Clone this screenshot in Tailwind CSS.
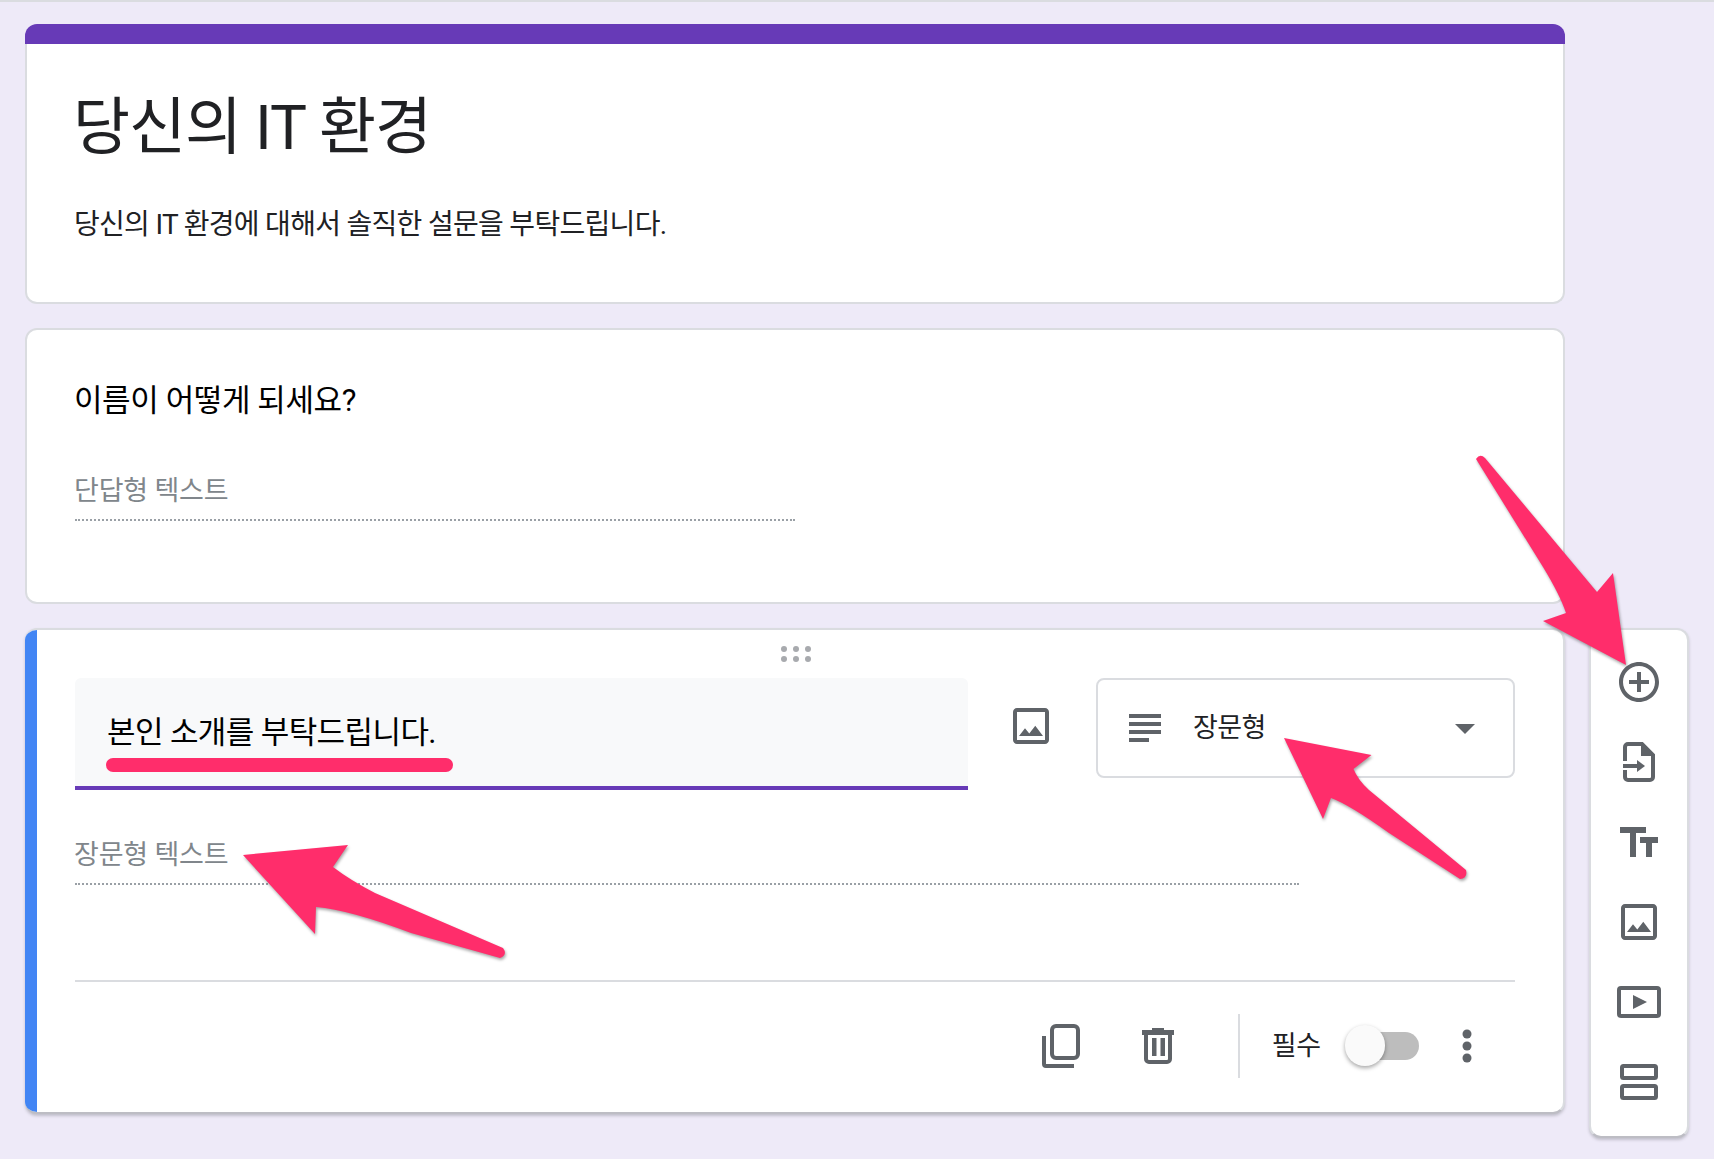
<!DOCTYPE html>
<html lang="ko">
<head>
<meta charset="utf-8">
<script src="https://cdn.jsdelivr.net/npm/@tailwindcss/browser@4"></script>
</head>
<body class="relative h-[1159px] w-[1714px] overflow-hidden border-t-2 border-[#dadce0] bg-[#eeeaf8] font-['Roboto','Noto_Sans_CJK_KR',sans-serif] text-[#202124]">
<main class="flex items-start pl-[25px] pt-[22px]">
  <div class="flex w-[1540px] flex-col">
    <section class="h-[280px]">
      <div class="h-5 rounded-t-xl bg-[#673ab7]"></div>
      <div class="h-[260px] rounded-b-xl border-x-2 border-b-2 border-[#dadce0] bg-white pl-[47px]">
        <h1 class="-ml-[1px] pt-[48px] text-[62px] leading-[72px] tracking-[-1.1px]">당신의 IT 환경</h1>
        <p class="mt-[43px] text-[28px] leading-[36px] tracking-[-0.7px]">당신의 IT 환경에 대해서 솔직한 설문을 부탁드립니다.</p>
      </div>
    </section>

    <section class="mt-[24px] h-[276px] rounded-xl border-2 border-[#dadce0] bg-white pl-[47px]">
      <h2 class="pt-[51px] text-[31px] leading-[40px] tracking-[-0.4px] text-black">이름이 어떻게 되세요?</h2>
      <p class="mt-[52px] text-[27px] leading-[36px] tracking-[-0.2px] text-[#80868b]">단답형 텍스트</p>
      <div class="ml-[1px] mt-[10px] w-[720px] border-b-2 border-dotted border-[#9aa0a6]"></div>
    </section>

    <section class="relative mt-[24px] h-[486px] overflow-hidden rounded-xl border-y-2 border-r-2 border-[#dadce0] border-b-[#bdbdc4] bg-white pl-[50px] pr-[50px] shadow-[0_2px_3px_rgba(60,64,67,.25)]">
      <div class="absolute inset-y-0 left-0 w-3 bg-[#4285f4]"></div>
      <div class="flex justify-center pl-[4px] pt-[16px]">
        <svg class="h-[16px] w-[32px]" viewBox="0 0 32 16" fill="#a8aaae"><circle cx="4" cy="3" r="3"/><circle cx="16" cy="3" r="3"/><circle cx="28" cy="3" r="3"/><circle cx="4" cy="13" r="3"/><circle cx="16" cy="13" r="3"/><circle cx="28" cy="13" r="3"/></svg>
      </div>
      <div class="mt-[16px] flex items-start">
        <div class="relative h-[112px] w-[893px] shrink-0 rounded-t-md border-b-4 border-[#673ab7] bg-[#f8f9fa] pl-[32px] pt-[35px] text-[31px] leading-[40px] tracking-[-0.6px] text-black">
          본인 소개를 부탁드립니다.
          <div class="absolute left-[31px] top-[80px] h-[14px] w-[347px] rounded-full bg-[#ff2d6b]"></div>
        </div>
        <svg class="ml-[39px] mt-[24px] h-[48px] w-[48px] shrink-0" viewBox="0 0 24 24" fill="#5f6368"><path d="M19 5v14H5V5h14m0-2H5c-1.100 0-2 .900-2 2v14c0 1.100.900 2 2 2h14c1.100 0 2-.900 2-2V5c0-1.100-.900-2-2-2zm-4.860 8.860l-3 3.870L9 13.140 6 17h12l-3.860-5.140z"/></svg>
        <div class="ml-[41px] flex h-[100px] w-[419px] shrink-0 items-center rounded-lg border-2 border-[#dadce0] pl-[31px] pr-[38px]">
          <svg class="h-[28px] w-[32px]" viewBox="0 0 32 28" fill="#5f6368"><rect width="32" height="4"/><rect y="8" width="32" height="4"/><rect y="16" width="32" height="4"/><rect y="24" width="20" height="4"/></svg>
          <span class="ml-[32px] text-[27px] leading-[36px] tracking-[-0.6px] text-[#202124]">장문형</span>
          <svg class="ml-auto mt-[2px] h-[10px] w-[20px]" viewBox="0 0 20 10" fill="#5f6368"><path d="M0 0h20L10 10z"/></svg>
        </div>
      </div>
      <p class="-ml-[1px] mt-[47px] text-[27px] leading-[36px] tracking-[-0.2px] text-[#80868b]">장문형 텍스트</p>
      <div class="mt-[10px] w-[1224px] border-b-2 border-dotted border-[#9aa0a6]"></div>
      <div class="mt-[95px] w-[1440px] border-b-2 border-[#dadce0]"></div>
      <div class="mt-[32px] flex h-[64px] w-[1440px] items-center pr-[43px]">
        <svg class="ml-auto h-[44px] w-[38px] shrink-0" viewBox="0 0 38 44" fill="none" stroke="#5f6368" stroke-width="4"><path d="M2 12v28a2 2 0 0 0 2 2h28"/><rect x="10" y="2" width="26" height="32" rx="4"/></svg>
        <svg class="ml-[62px] h-[36px] w-[32px] shrink-0" viewBox="0 0 32 36" fill="#5f6368"><rect y="2" width="32" height="5"/><rect x="10" width="12" height="4"/><path d="M4 6v25a3 3 0 0 0 3 3h18a3 3 0 0 0 3-3V6" fill="none" stroke="#5f6368" stroke-width="4"/><rect x="10" y="10" width="4.500" height="18"/><rect x="18.500" y="10" width="4.500" height="18"/></svg>
        <div class="ml-[64px] h-[64px] w-[2px] shrink-0 bg-[#dadce0]"></div>
        <span class="ml-[32px] text-[27px] leading-[36px] tracking-[-0.2px] text-[#202124]">필수</span>
        <div class="relative ml-[24px] h-[42px] w-[74px] shrink-0">
          <div class="absolute right-0 top-[7px] h-[28px] w-[60px] rounded-full bg-[#bdbdbd]"></div>
          <div class="absolute left-0 top-0 h-[41px] w-[40px] rounded-full bg-[#fafafa] shadow-[0_2px_4px_rgba(0,0,0,.35)]"></div>
        </div>
        <svg class="ml-[43px] h-[34px] w-[10px] shrink-0" viewBox="0 0 10 34" fill="#5f6368"><circle cx="5" cy="5" r="4.500"/><circle cx="5" cy="17" r="4.500"/><circle cx="5" cy="29" r="4.500"/></svg>
      </div>
    </section>
  </div>

  <aside class="ml-[24px] mt-[604px] flex h-[510px] w-[100px] flex-col items-center rounded-xl border-2 border-[#dadce0] border-b-[#bdbdc4] bg-white pt-[28px] shadow-[0_2px_3px_rgba(60,64,67,.25)]">
    <svg class="h-[48px] w-[48px] shrink-0" viewBox="0 0 24 24" fill="#5f6368"><path d="M13 7h-2v4H7v2h4v4h2v-4h4v-2h-4V7zm-1-5C6.480 2 2 6.480 2 12s4.480 10 10 10 10-4.480 10-10S17.520 2 12 2zm0 18c-4.410 0-8-3.590-8-8s3.590-8 8-8 8 3.590 8 8-3.590 8-8 8z"/></svg>
    <svg class="mt-[36px] h-[40px] w-[32px] shrink-0" viewBox="0 0 32 40" fill="none" stroke="#5f6368" stroke-width="4"><path d="M2 19V5a3 3 0 0 1 3-3h14l11 11v22a3 3 0 0 1-3 3H5a3 3 0 0 1-3-3v-7"/><path d="M18 2L32 14H18z" fill="#5f6368" stroke="none"/><path d="M0 24h16" /><path d="M14 18l8 6-8 6z" fill="#5f6368" stroke="none"/></svg>
    <svg class="mt-[37px] h-[48px] w-[48px] shrink-0" viewBox="0 0 24 24" fill="#5f6368"><path d="M2.500 4v3h5v12h3V7h5V4h-13zm19 5h-9v3h3v7h3v-7h3V9z"/></svg>
    <svg class="mt-[31px] h-[48px] w-[48px] shrink-0" viewBox="0 0 24 24" fill="#5f6368"><path d="M19 5v14H5V5h14m0-2H5c-1.100 0-2 .900-2 2v14c0 1.100.900 2 2 2h14c1.100 0 2-.900 2-2V5c0-1.100-.900-2-2-2zm-4.860 8.860l-3 3.870L9 13.140 6 17h12l-3.860-5.140z"/></svg>
    <svg class="mt-[40px] h-[32px] w-[44px] shrink-0" viewBox="0 0 44 32" fill="#5f6368"><rect x="2" y="2" width="40" height="28" rx="2" fill="none" stroke="#5f6368" stroke-width="4"/><path d="M16 9l14 7-14 7z"/></svg>
    <svg class="mt-[46px] h-[36px] w-[38px] shrink-0" viewBox="0 0 38 36" fill="none" stroke="#5f6368" stroke-width="4"><rect x="2" y="2" width="34" height="12" rx="1.500"/><rect x="2" y="22" width="34" height="12" rx="1.500"/></svg>
  </aside>
</main>

<svg class="absolute left-0 top-[-2px] h-[1159px] w-[1714px] drop-shadow-[1px_2px_1.500px_rgba(0,0,0,.35)]" viewBox="0 0 1714 1159" fill="#ff2d6b">
  <path d="M1476 459Q1480 453 1485 458L1597 592 1613 573 1626 665 1543 621 1566 613Q1560 595 1543 567z"/>
  <path d="M1284 738L1371.500 755 1353.500 769Q1358 780 1369 790L1466 870Q1468 878 1460 879L1389 833Q1350 805 1331 798L1323 819z"/>
  <path d="M243 855L348 845 333 867Q350 880 375 893L503 948Q508 955 500 958L411 933Q350 910 316 907L315 934z"/>
</svg>
</body>
</html>
